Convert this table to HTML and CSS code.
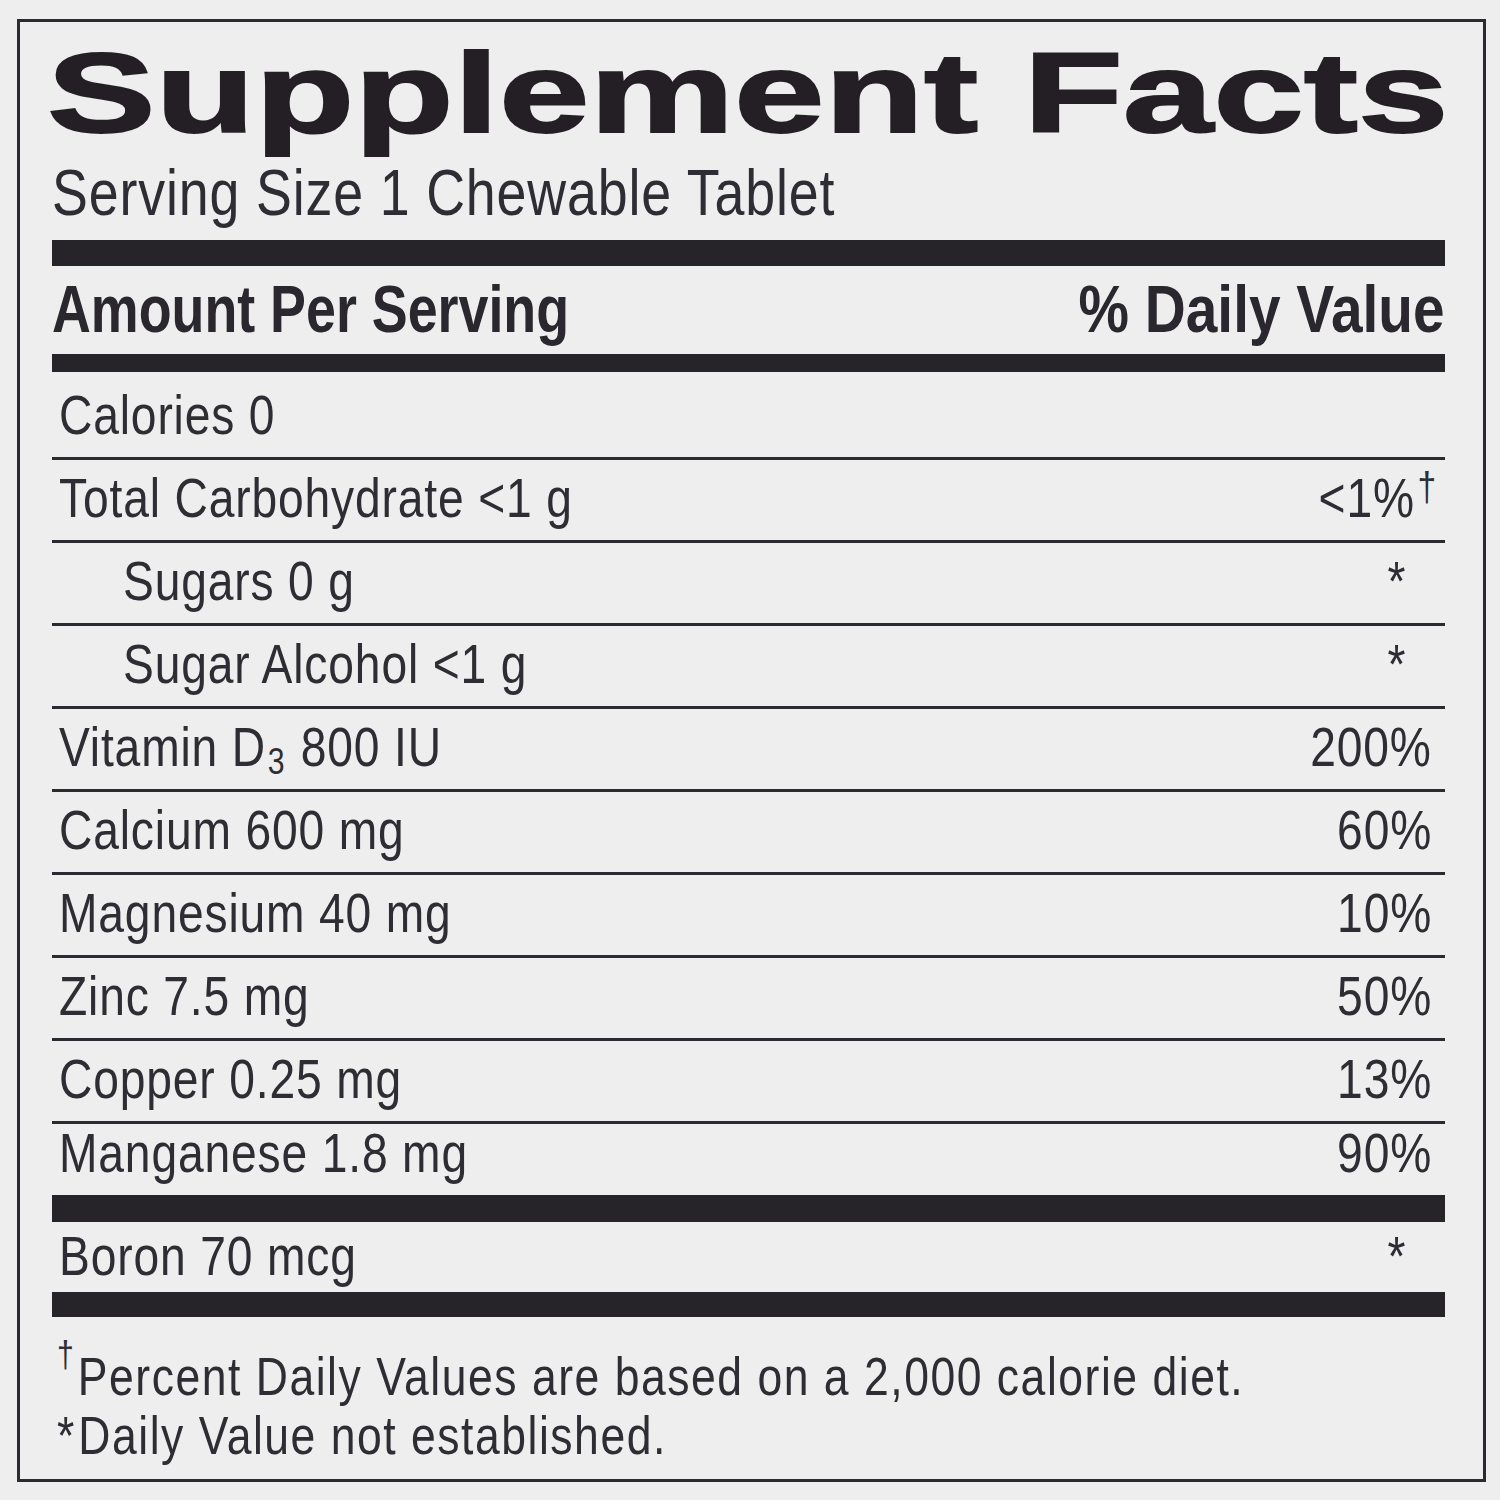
FILE: index.html
```html
<!DOCTYPE html>
<html lang="en">
<head>
<meta charset="utf-8">
<title>Supplement Facts</title>
<link rel="stylesheet" href="styles.css">
</head>
<body>
<div class="label">
  <h1 class="title"><span class="title-text">Supplement Facts</span></h1>
  <p class="serving"><span class="cond">Serving Size 1 Chewable Tablet</span></p>
  <div class="bar bar-top"></div>
  <div class="head"><span class="cond head-l">Amount Per Serving</span><span class="cond cond-r head-r">% Daily Value</span></div>
  <div class="bar bar-head"></div>
  <div class="row row-first"><span class="cond">Calories 0</span></div>
  <div class="row"><span class="cond">Total Carbohydrate &lt;1 g</span><span class="cond cond-r">&lt;1%<span class="dag">†</span></span></div>
  <div class="row indent"><span class="cond">Sugars 0 g</span><span class="cond cond-r"><span class="star">*</span></span></div>
  <div class="row indent"><span class="cond">Sugar Alcohol &lt;1 g</span><span class="cond cond-r"><span class="star">*</span></span></div>
  <div class="row"><span class="cond">Vitamin D<span class="sub">3</span> 800 IU</span><span class="cond cond-r">200%</span></div>
  <div class="row"><span class="cond">Calcium 600 mg</span><span class="cond cond-r">60%</span></div>
  <div class="row"><span class="cond">Magnesium 40 mg</span><span class="cond cond-r">10%</span></div>
  <div class="row"><span class="cond">Zinc 7.5 mg</span><span class="cond cond-r">50%</span></div>
  <div class="row"><span class="cond">Copper 0.25 mg</span><span class="cond cond-r">13%</span></div>
  <div class="row row-last"><span class="cond">Manganese 1.8 mg</span><span class="cond cond-r">90%</span></div>
  <div class="bar bar-mid"></div>
  <div class="row row-boron"><span class="cond">Boron 70 mcg</span><span class="cond cond-r"><span class="star">*</span></span></div>
  <div class="bar bar-bottom"></div>
  <div class="notes">
    <p class="note"><span class="cond"><span class="note-dag">†</span>Percent Daily Values are based on a 2,000 calorie diet.</span></p>
    <p class="note"><span class="cond"><span class="note-star">*</span>Daily Value not established.</span></p>
  </div>
</div>
</body>
</html>
```

FILE: styles.css
```css
* {
  box-sizing: border-box;
  margin: 0;
  padding: 0;
}

html,
body {
  background: #eeeeee;
}

body {
  color: #2e2d33;
  font-family: "Liberation Sans", Arial, sans-serif;
}

.label {
  margin: 19px 0 0 17px;
  width: 1469px;
  height: 1463px;
  border: 3px solid #2c2a30;
  padding: 21px 38px 0 32px;
}

.title {
  font-weight: 700;
  font-size: 113px;
  line-height: 100px;
  height: 100px;
  white-space: nowrap;
}

.title-text {
  display: inline-block;
  margin-left: -5px;
  transform: scaleX(1.44);
  transform-origin: 0 0;
  color: #231f24;
  -webkit-text-stroke: 1.8px #231f24;
}

/* condensed face: Helvetica Condensed look via horizontal compression */
.cond {
  display: inline-block;
  transform: scaleX(0.84);
  transform-origin: 0 50%;
  white-space: nowrap;
}

.cond-r {
  transform-origin: 100% 50%;
}

.serving {
  margin-top: 18px;
  font-size: 64px;
  line-height: 64px;
  letter-spacing: 1px;
  white-space: nowrap;
}

.bar {
  background: #262329;
}

.bar-top {
  margin-top: 15px;
  height: 26px;
}

.head {
  display: flex;
  justify-content: space-between;
  margin-top: 10px;
  font-weight: 700;
  font-size: 66px;
  line-height: 66px;
  color: #2a282e;
}

.head-l {
  transform: scaleX(0.815);
}

.head-r {
  transform: scaleX(0.86);
}

.bar-head {
  margin-top: 12px;
  height: 18px;
}

.row {
  display: flex;
  justify-content: space-between;
  align-items: flex-end;
  height: 83px;
  border-bottom: 3px solid #2c2a30;
  padding: 0 13px 12px 7px;
  font-size: 55px;
  line-height: 60px;
  letter-spacing: 1px;
  white-space: nowrap;
}

.row-first {
  height: 88px;
}

.row-last {
  height: 71px;
  border-bottom: none;
}

.row-boron {
  height: 70px;
  border-bottom: none;
  padding-bottom: 6px;
}

.indent {
  padding-left: 71px;
}

.sub {
  font-size: 36px;
  line-height: 0;
  vertical-align: -8px;
  letter-spacing: 0;
  margin: 0 3px 0 2px;
}

.dag {
  font-size: 40px;
  line-height: 0;
  vertical-align: 16px;
  margin-right: -6px;
  margin-left: 3px;
}

.star {
  margin-right: 31px;
}

.bar-mid {
  height: 27px;
}

.bar-bottom {
  height: 25px;
}

.notes {
  margin-top: 30px;
  padding-left: 5px;
}

.note {
  font-size: 53px;
  line-height: 59px;
  letter-spacing: 1.8px;
  white-space: nowrap;
}

.note-dag {
  font-size: 36px;
  line-height: 0;
  vertical-align: 28px;
  margin-right: 3px;
}

.note-star {
  margin-right: 3px;
}
```
